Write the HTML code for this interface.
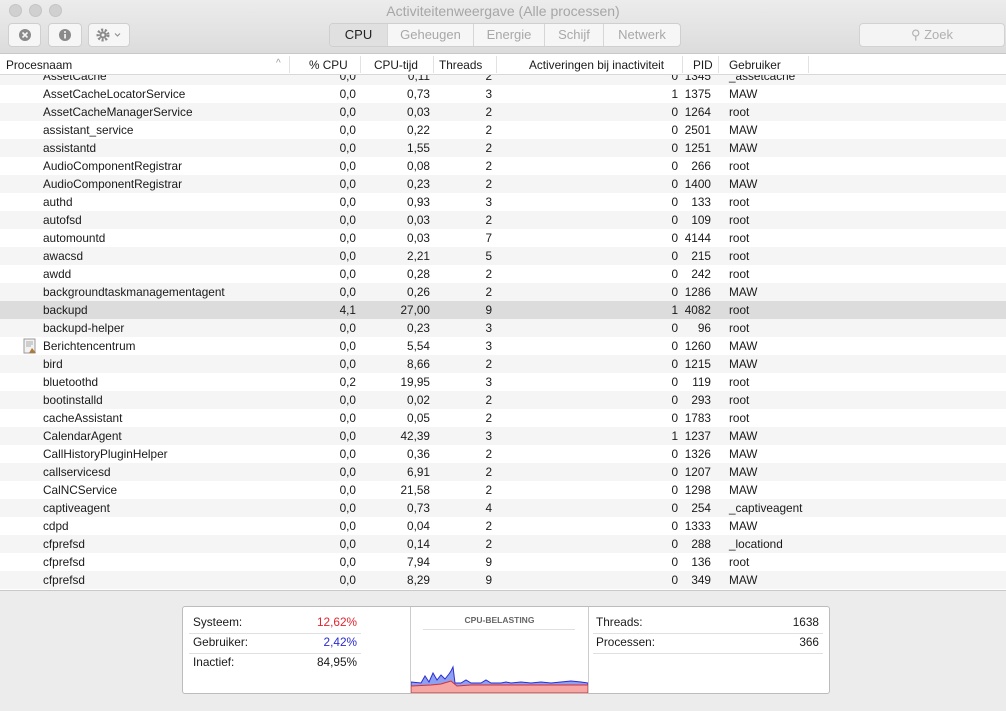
<!DOCTYPE html>
<html><head><meta charset="utf-8"><style>
*{margin:0;padding:0;box-sizing:border-box}
body{width:1006px;height:711px;overflow:hidden;background:#ececec;font-family:"Liberation Sans",sans-serif;font-size:11.8px;color:#1a1a1a;position:relative}
.tb{position:absolute;left:0;top:0;width:1006px;height:54px;background:linear-gradient(#ececec,#dcdcdc);border-bottom:1px solid #c8c8c8}
.dot{position:absolute;top:4px;width:13px;height:13px;border-radius:50%;background:#d0d0d0;border:1px solid #c4c4c4}
.title{position:absolute;top:3px;left:0;width:1006px;text-align:center;color:#a6a6a6;font-size:14px}
.btn{position:absolute;top:23px;height:24px;background:#f6f6f6;border:1px solid #cfcfcf;border-radius:4px}
.seg{position:absolute;top:23px;left:329px;height:24px;display:flex;border:1px solid #cfcfcf;border-radius:4px;overflow:hidden;background:#f6f6f6}
.seg div{line-height:22px;font-size:13px;color:#a8a8a8;border-left:1px solid #d6d6d6;text-align:center}
.seg div:first-child{border:0;background:#e0e0e0;color:#222}
.search{position:absolute;left:859px;top:23px;width:146px;height:24px;border:1px solid #d2d2d2;border-radius:4px;background:#f4f4f4;color:#b0b0b0;font-size:13px;line-height:22px;text-align:center}
.hdr{position:absolute;top:54px;left:0;width:1006px;height:21px;background:#fff;border-bottom:1px solid #d8d8d8}
.hdr span{position:absolute;top:4px}
.vs{position:absolute;top:2px;width:1px;height:17px;background:#e2e2e2}
.tbl{position:absolute;top:75px;left:0;width:1006px;height:516px;background:#fff;overflow:hidden;border-bottom:1px solid #c8c8c8}
.r{position:absolute;left:0;width:1006px;height:18px;line-height:18px}
.r.g{background:#f5f5f5}.r.s{background:#dcdcdc}
.r span{position:absolute}
.n{left:43px}.c{right:650px}.t{right:576px}.th{right:514px}.a{right:328px}.p{right:295px}.u{left:729px}
.bot{position:absolute;left:182px;top:606px;width:648px;height:88px;background:#fff;border:1px solid #bcbcbc;border-radius:3px}
.bot .l{position:absolute}
.hl{position:absolute;height:1px;background:#e0e0e0}
</style></head><body>
<div class="tb">
<div class="dot" style="left:9px"></div><div class="dot" style="left:29px"></div><div class="dot" style="left:49px"></div>
<div class="title">Activiteitenweergave (Alle processen)</div>
<div class="btn" style="left:8px;width:33px"><svg width="31" height="22"><circle cx="16" cy="11" r="6" fill="#8a8a8a"/><path d="M13.5 8.5l5 5M18.5 8.5l-5 5" stroke="#f6f6f6" stroke-width="1.6"/></svg></div>
<div class="btn" style="left:48px;width:34px"><svg width="32" height="22"><circle cx="16" cy="11" r="6" fill="#8a8a8a"/><rect x="15.2" y="10" width="1.7" height="4.5" fill="#f6f6f6"/><circle cx="16" cy="8" r="1" fill="#f6f6f6"/></svg></div>
<div class="btn" style="left:88px;width:42px"><svg width="40" height="22"><circle cx="14" cy="11" r="5" fill="none" stroke="#8a8a8a" stroke-width="3" stroke-dasharray="2 1.6"/><circle cx="14" cy="11" r="3.5" fill="#8a8a8a"/><circle cx="14" cy="11" r="1.5" fill="#f6f6f6"/><path d="M26 9.5l2.5 2.5 2.5-2.5" fill="none" stroke="#8a8a8a"/></svg></div>
<div class="seg"><div style="width:57px">CPU</div><div style="width:86px">Geheugen</div><div style="width:71px">Energie</div><div style="width:59px">Schijf</div><div style="width:77px">Netwerk</div></div>
<div class="search">&#9906; Zoek</div>
</div>
<div class="hdr">
<span style="left:6px">Procesnaam</span><span style="left:276px;color:#999;font-size:10px">^</span>
<div class="vs" style="left:289px"></div><span style="left:309px">% CPU</span>
<div class="vs" style="left:360px"></div><span style="left:374px">CPU-tijd</span>
<div class="vs" style="left:433px"></div><span style="left:439px">Threads</span>
<div class="vs" style="left:496px"></div><span style="left:529px">Activeringen bij inactiviteit</span>
<div class="vs" style="left:682px"></div><span style="left:693px">PID</span>
<div class="vs" style="left:718px"></div><span style="left:729px">Gebruiker</span>
<div class="vs" style="left:808px"></div>
</div>
<div class="tbl" id="t"></div>
<div class="bot">
<span class="l" style="left:10px;top:8px">Systeem:</span><span class="l" style="right:472px;top:8px;color:#e0262f">12,62%</span>
<div class="hl" style="left:6px;width:172px;top:26px"></div>
<span class="l" style="left:10px;top:28px">Gebruiker:</span><span class="l" style="right:472px;top:28px;color:#2a2ad0">2,42%</span>
<div class="hl" style="left:6px;width:172px;top:46px"></div>
<span class="l" style="left:10px;top:48px">Inactief:</span><span class="l" style="right:472px;top:48px">84,95%</span>
<div style="position:absolute;left:227px;top:0;width:1px;height:86px;background:#ccc"></div>
<div style="position:absolute;left:405px;top:0;width:1px;height:86px;background:#ccc"></div>
<span class="l" style="left:228px;top:8px;width:177px;text-align:center;font-size:8.5px;font-weight:bold;color:#666">CPU-BELASTING</span>
<div class="hl" style="left:240px;width:152px;top:22px"></div>
<svg style="position:absolute;left:228px;top:56px" width="177" height="30"><path d="M0 19L10 20 14 13 18 19 22 10 26 17 30 12 34 16 38 11 40 8 42 4 44 20 50 20 55 17 60 20 70 20 75 17 80 20 90 20 95 19 100 20 110 19 120 20 130 19 140 20 150 19 160 18 170 19 177 20V30H0Z" fill="#8da0f2" stroke="#2d2dd0"/><path d="M0 23L20 22 30 21 40 18 46 23 60 22 80 22 100 22 120 22 140 22 160 22 177 22V30H0Z" fill="#f6a6a4" stroke="#d83030"/></svg>
<span class="l" style="left:413px;top:8px">Threads:</span><span class="l" style="right:10px;top:8px">1638</span>
<div class="hl" style="left:410px;width:230px;top:26px"></div>
<span class="l" style="left:413px;top:28px">Processen:</span><span class="l" style="right:10px;top:28px">366</span>
<div class="hl" style="left:410px;width:230px;top:46px"></div>
</div>
<script>
const d=[["AssetCache","0,0","0,11","2","0","1345","_assetcache"],["AssetCacheLocatorService","0,0","0,73","3","1","1375","MAW"],["AssetCacheManagerService","0,0","0,03","2","0","1264","root"],["assistant_service","0,0","0,22","2","0","2501","MAW"],["assistantd","0,0","1,55","2","0","1251","MAW"],["AudioComponentRegistrar","0,0","0,08","2","0","266","root"],["AudioComponentRegistrar","0,0","0,23","2","0","1400","MAW"],["authd","0,0","0,93","3","0","133","root"],["autofsd","0,0","0,03","2","0","109","root"],["automountd","0,0","0,03","7","0","4144","root"],["awacsd","0,0","2,21","5","0","215","root"],["awdd","0,0","0,28","2","0","242","root"],["backgroundtaskmanagementagent","0,0","0,26","2","0","1286","MAW"],["backupd","4,1","27,00","9","1","4082","root"],["backupd-helper","0,0","0,23","3","0","96","root"],["Berichtencentrum","0,0","5,54","3","0","1260","MAW"],["bird","0,0","8,66","2","0","1215","MAW"],["bluetoothd","0,2","19,95","3","0","119","root"],["bootinstalld","0,0","0,02","2","0","293","root"],["cacheAssistant","0,0","0,05","2","0","1783","root"],["CalendarAgent","0,0","42,39","3","1","1237","MAW"],["CallHistoryPluginHelper","0,0","0,36","2","0","1326","MAW"],["callservicesd","0,0","6,91","2","0","1207","MAW"],["CalNCService","0,0","21,58","2","0","1298","MAW"],["captiveagent","0,0","0,73","4","0","254","_captiveagent"],["cdpd","0,0","0,04","2","0","1333","MAW"],["cfprefsd","0,0","0,14","2","0","288","_locationd"],["cfprefsd","0,0","7,94","9","0","136","root"],["cfprefsd","0,0","8,29","9","0","349","MAW"]];
let h="";d.forEach((r,i)=>{const y=-8+i*18;const cls=i==13?"s":(i%2==1?"":"g");
h+=`<div class="r ${cls}" style="top:${y}px">${i==15?'<svg style="position:absolute;left:22px;top:1px" width="16" height="16"><rect x="2" y="1" width="11" height="14" fill="#f2f2f2" stroke="#999"/><path d="M4 4h7M4 6h7M4 8h5" stroke="#aaa"/><path d="M7 15l3-5 4 5z" fill="#b07a3a"/></svg>':''}<span class="n">${r[0]}</span><span class="c">${r[1]}</span><span class="t">${r[2]}</span><span class="th">${r[3]}</span><span class="a">${r[4]}</span><span class="p">${r[5]}</span><span class="u">${r[6]}</span></div>`});
document.getElementById("t").innerHTML=h;
</script>
</body></html>
